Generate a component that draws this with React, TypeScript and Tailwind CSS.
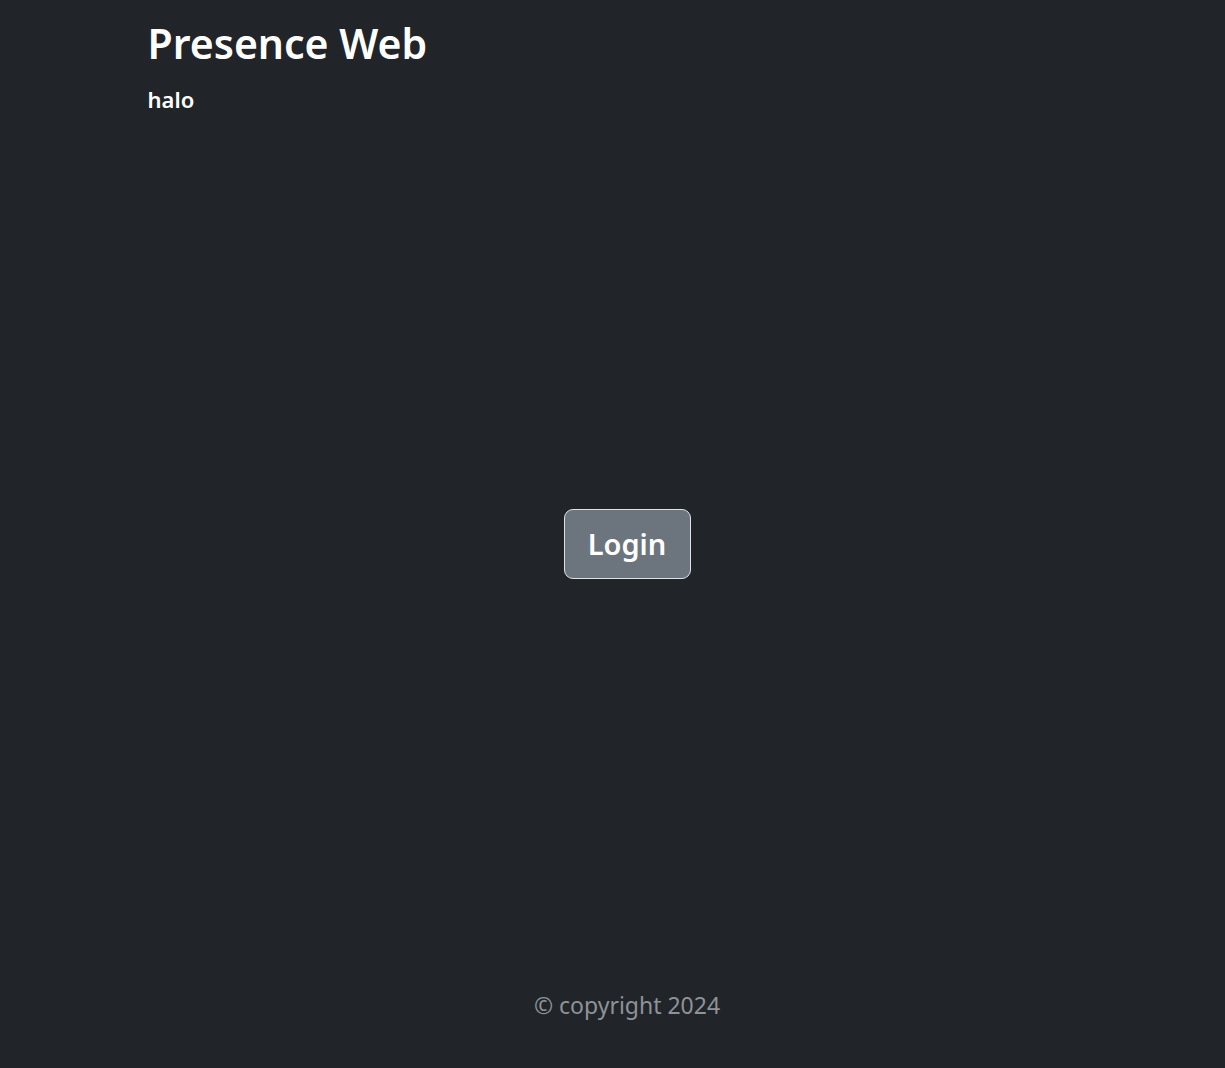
export default function App() {
  return (
    <div
      className="flex min-h-[1068px] flex-col bg-[#212529] text-white"
      style={{ fontFamily: '"Noto Sans", "Open Sans", sans-serif' }}
    >
      <header className="mx-auto w-full max-w-[960px] px-[15px]">
        <h1 className="mt-[19px] text-[41px] font-semibold leading-[1.2]">Presence Web</h1>
        <h4 className="mt-[18px] text-[22px] font-semibold leading-[1.2]">halo</h4>
      </header>

      <main className="flex flex-1 items-center justify-center pb-[13px] pl-[29px]">
        <button className="h-[70px] w-[127px] rounded-[9px] border border-[#dee2e6] bg-[#6c757d] text-[29px] font-semibold text-white">
          Login
        </button>
      </main>

      <footer className="pb-[46px] pl-[29px] text-center text-[23px] text-[#8e9398]">© copyright 2024</footer>
    </div>
  );
}
